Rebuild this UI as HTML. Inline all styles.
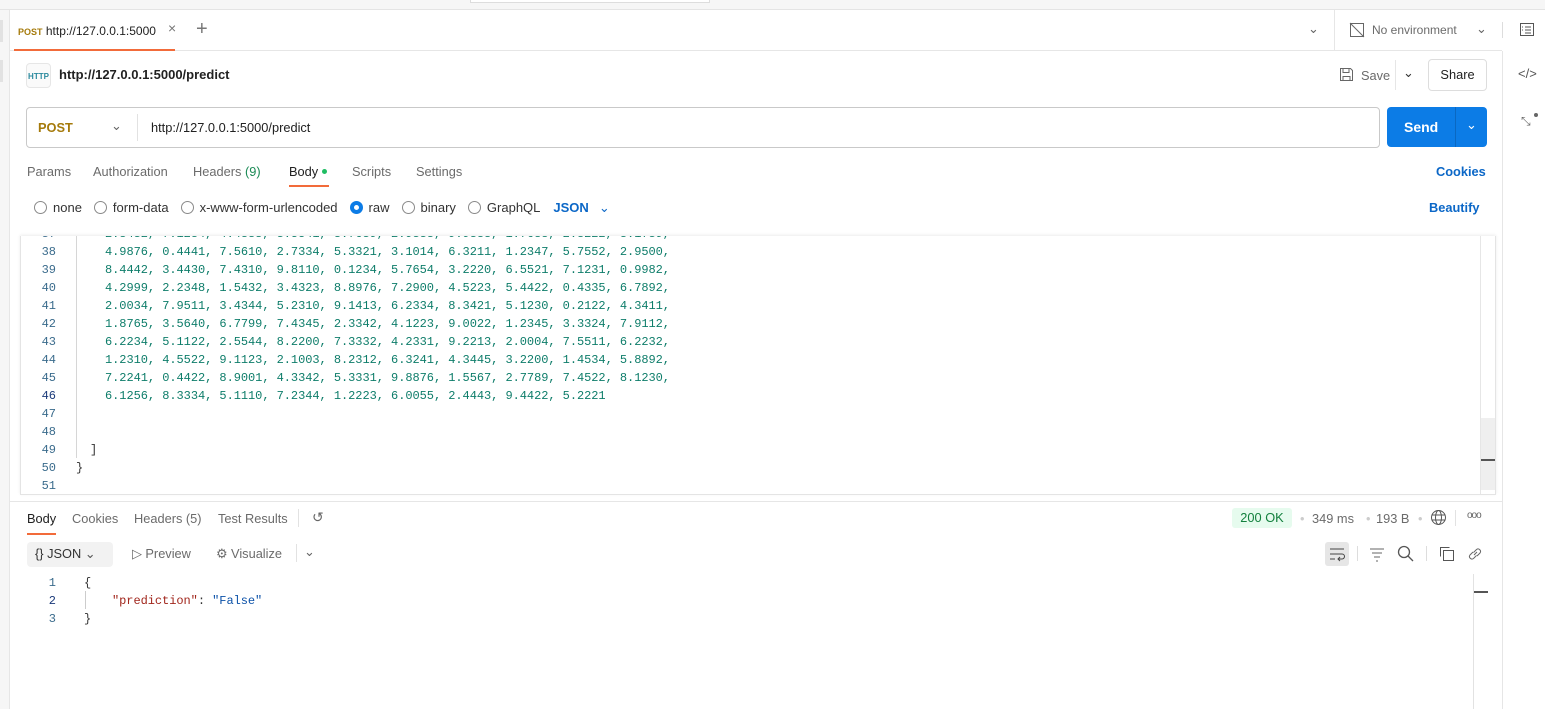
<!DOCTYPE html>
<html><head><meta charset="utf-8"><style>
*{box-sizing:border-box;margin:0;padding:0}
body{width:1545px;height:709px;overflow:hidden;background:#fff;font-family:"Liberation Sans",sans-serif;font-size:12.8px;color:#212121;position:relative}
.a{position:absolute}
.mono{font-family:"Liberation Mono",monospace;font-size:12px}
.g{color:#6b6b6b}
.ln{position:absolute;left:30px;width:26px;text-align:right;color:#3a6b8c}
.code{position:absolute;left:105px;color:#0e7d6a;white-space:pre;letter-spacing:-0.05px}
.rad{display:inline-block;width:13px;height:13px;border:1px solid #8a8a8a;border-radius:50%;vertical-align:-2px;margin-right:6px}
.chev{font-size:13px}
</style></head><body>
<div class="a" style="left:0;top:0;width:1545px;height:10px;background:#f6f6f6;border-bottom:1px solid #e4e4e4"></div>
<div class="a" style="left:470px;top:0;width:240px;height:3px;border:1px solid #ddd;border-top:none;background:#fff"></div>
<div class="a" style="left:0;top:10px;width:10px;height:699px;background:#f6f6f6;border-right:1px solid #e6e6e6"></div>
<div class="a" style="left:0;top:20px;width:3px;height:22px;background:#e2e2e2"></div>
<div class="a" style="left:0;top:60px;width:3px;height:22px;background:#e2e2e2"></div>
<div class="a" style="left:10px;top:50px;width:1492px;height:1px;background:#e6e6e6"></div>
<div class="a" style="left:18px;top:24px;font-size:12px"><span style="color:#a57a0b;font-size:9px;font-weight:bold">POST</span> http://127.0.0.1:5000</div>
<div class="a" style="left:168px;top:20px;color:#777;font-size:14px">×</div>
<div class="a" style="left:196px;top:18px;color:#777;font-size:20px;font-weight:300">+</div>
<div class="a" style="left:14px;top:49px;width:161px;height:2px;background:#f26b3a"></div>
<div class="a chev" style="left:1308px;top:21px;color:#666">&#8964;</div>
<div class="a" style="left:1334px;top:10px;width:1px;height:40px;background:#e6e6e6"></div>
<svg class="a" style="left:1349px;top:22px" width="16" height="16" viewBox="0 0 16 16" fill="none" stroke="#666"><rect x="1.5" y="1.5" width="13" height="13"/><path d="M1 1l14 14"/></svg>
<div class="a g" style="left:1372px;top:23px;font-size:12px">No environment</div>
<div class="a chev" style="left:1476px;top:21px;color:#666">&#8964;</div>
<div class="a" style="left:1502px;top:22px;width:1px;height:16px;background:#ddd"></div>
<svg class="a" style="left:1519px;top:22px" width="16" height="16" viewBox="0 0 16 16" fill="none" stroke="#555"><rect x="1.5" y="1.5" width="13" height="12"/><path d="M6 5h6M6 8h6M6 11h6M3 5h1M3 8h1"/></svg>
<div class="a" style="left:1502px;top:51px;width:1px;height:658px;background:#e6e6e6"></div>
<div class="a" style="left:1518px;top:66px;color:#555;font-size:13px">&lt;/&gt;</div>
<div class="a" style="left:1521px;top:114px;color:#666;font-size:12px">⤡</div>
<div class="a" style="left:1534px;top:113px;width:4px;height:4px;border-radius:50%;background:#666"></div>
<div class="a" style="left:26px;top:63px;width:25px;height:25px;border:1px solid #e6e6e6;border-radius:4px;background:#fafafa;color:#2b8a9e;font-size:8px;font-weight:bold;text-align:center;line-height:25px">HTTP</div>
<div class="a" style="left:59px;top:67px;font-size:13px;font-weight:bold">http://127.0.0.1:5000/predict</div>
<svg class="a" style="left:1339px;top:67px" width="15" height="15" viewBox="0 0 15 15" fill="none" stroke="#666"><path d="M1.5 1.5h10l2 2v10h-12z M4 1.5v4h6v-4 M4 13.5v-4h7v4"/></svg>
<div class="a g" style="left:1361px;top:68px">Save</div>
<div class="a" style="left:1395px;top:60px;width:1px;height:30px;background:#e6e6e6"></div>
<div class="a chev" style="left:1403px;top:65px;color:#333">&#8964;</div>
<div class="a" style="left:1428px;top:59px;width:59px;height:32px;border:1px solid #ddd;border-radius:4px;text-align:center;line-height:30px">Share</div>
<div class="a" style="left:26px;top:107px;width:1354px;height:41px;border:1px solid #c9c9c9;border-radius:4px"></div>
<div class="a" style="left:38px;top:120px;color:#a57a0b;font-weight:bold">POST</div>
<div class="a chev" style="left:111px;top:118px;color:#666">&#8964;</div>
<div class="a" style="left:137px;top:114px;width:1px;height:27px;background:#e2e2e2"></div>
<div class="a" style="left:151px;top:120px">http://127.0.0.1:5000/predict</div>
<div class="a" style="left:1387px;top:107px;width:100px;height:40px;background:#0c7ce6;border-radius:4px"></div>
<div class="a" style="left:1404px;top:119px;color:#fff;font-weight:bold;font-size:14px">Send</div>
<div class="a" style="left:1455px;top:107px;width:1px;height:40px;background:#0a68c2"></div>
<div class="a chev" style="left:1466px;top:117px;color:#fff">&#8964;</div>
<div class="a g" style="left:27px;top:164px">Params</div>
<div class="a g" style="left:93px;top:164px">Authorization</div>
<div class="a g" style="left:193px;top:164px">Headers <span style="color:#1a8a55">(9)</span></div>
<div class="a" style="left:289px;top:164px">Body</div>
<div class="a" style="left:322px;top:169px;width:5px;height:5px;border-radius:50%;background:#1fbd63"></div>
<div class="a" style="left:289px;top:185px;width:40px;height:2px;background:#f26b3a"></div>
<div class="a g" style="left:352px;top:164px">Scripts</div>
<div class="a g" style="left:416px;top:164px">Settings</div>
<div class="a" style="left:1436px;top:164px;color:#0b67c7;font-weight:bold">Cookies</div>
<div class="a" style="left:34px;top:200px;color:#333;white-space:nowrap;font-size:13px">
<span class="rad"></span>none<span style="margin-left:12px" class="rad"></span>form-data<span style="margin-left:12px" class="rad"></span>x-www-form-urlencoded<span style="margin-left:12px;border:4px solid #0c7ce6" class="rad"></span>raw<span style="margin-left:12px" class="rad"></span>binary<span style="margin-left:12px" class="rad"></span>GraphQL<span style="margin-left:13px;color:#0b67c7;font-weight:bold">JSON</span><span style="margin-left:10px;color:#0b67c7" class="chev">&#8964;</span></div>
<div class="a" style="left:1429px;top:200px;color:#0b67c7;font-weight:bold">Beautify</div>
<div class="a" style="left:20px;top:236px;width:1476px;height:259px;border:1px solid #e4e4e4;border-top:none;overflow:hidden;box-shadow:0 -1px 3px rgba(0,0,0,.08)"></div>
<div class="a" style="left:76px;top:236px;width:1px;height:222px;background:#d6d6d6"></div>
<div class="a" style="left:1480px;top:236px;width:15px;height:258px;border-left:1px solid #e6e6e6"></div>
<div class="a" style="left:1481px;top:418px;width:14px;height:72px;background:#efefef"></div>
<div class="a" style="left:1481px;top:459px;width:14px;height:2px;background:#555"></div>
<div class="mono" style="position:absolute;left:0;top:0;width:1480px;height:494px;overflow:hidden">
<div style="position:absolute;left:0;top:236px;width:1480px;height:258px;overflow:hidden">
<div style="position:relative;top:-11px;line-height:18px">
<div style="position:relative;height:18px"><span class="ln">37</span><span class="code">2.3432, 7.1234, 4.4333, 3.5541, 3.7639, 2.9333, 9.9333, 1.7633, 2.3222, 3.1739,</span></div>
<div style="position:relative;height:18px"><span class="ln">38</span><span class="code">4.9876, 0.4441, 7.5610, 2.7334, 5.3321, 3.1014, 6.3211, 1.2347, 5.7552, 2.9500,</span></div>
<div style="position:relative;height:18px"><span class="ln">39</span><span class="code">8.4442, 3.4430, 7.4310, 9.8110, 0.1234, 5.7654, 3.2220, 6.5521, 7.1231, 0.9982,</span></div>
<div style="position:relative;height:18px"><span class="ln">40</span><span class="code">4.2999, 2.2348, 1.5432, 3.4323, 8.8976, 7.2900, 4.5223, 5.4422, 0.4335, 6.7892,</span></div>
<div style="position:relative;height:18px"><span class="ln">41</span><span class="code">2.0034, 7.9511, 3.4344, 5.2310, 9.1413, 6.2334, 8.3421, 5.1230, 0.2122, 4.3411,</span></div>
<div style="position:relative;height:18px"><span class="ln">42</span><span class="code">1.8765, 3.5640, 6.7799, 7.4345, 2.3342, 4.1223, 9.0022, 1.2345, 3.3324, 7.9112,</span></div>
<div style="position:relative;height:18px"><span class="ln">43</span><span class="code">6.2234, 5.1122, 2.5544, 8.2200, 7.3332, 4.2331, 9.2213, 2.0004, 7.5511, 6.2232,</span></div>
<div style="position:relative;height:18px"><span class="ln">44</span><span class="code">1.2310, 4.5522, 9.1123, 2.1003, 8.2312, 6.3241, 4.3445, 3.2200, 1.4534, 5.8892,</span></div>
<div style="position:relative;height:18px"><span class="ln">45</span><span class="code">7.2241, 0.4422, 8.9001, 4.3342, 5.3331, 9.8876, 1.5567, 2.7789, 7.4522, 8.1230,</span></div>
<div style="position:relative;height:18px"><span class="ln" style="color:#1b3a7a">46</span><span class="code">6.1256, 8.3334, 5.1110, 7.2344, 1.2223, 6.0055, 2.4443, 9.4422, 5.2221</span></div>
<div style="position:relative;height:18px"><span class="ln">47</span></div>
<div style="position:relative;height:18px"><span class="ln">48</span></div>
<div style="position:relative;height:18px"><span class="ln">49</span><span class="code" style="left:90px;color:#333">]</span></div>
<div style="position:relative;height:18px"><span class="ln">50</span><span class="code" style="left:76px;color:#333">}</span></div>
<div style="position:relative;height:18px"><span class="ln">51</span></div>
</div></div></div>
<div class="a" style="left:10px;top:501px;width:1492px;height:1px;background:#e6e6e6"></div>
<div class="a" style="left:27px;top:511px">Body</div>
<div class="a" style="left:27px;top:533px;width:29px;height:2px;background:#f26b3a"></div>
<div class="a g" style="left:72px;top:511px">Cookies</div>
<div class="a g" style="left:134px;top:511px">Headers (5)</div>
<div class="a g" style="left:218px;top:511px">Test Results</div>
<div class="a" style="left:298px;top:509px;width:1px;height:18px;background:#e2e2e2"></div>
<div class="a" style="left:312px;top:509px;color:#666;font-size:14px">↺</div>
<div class="a" style="left:1232px;top:508px;width:60px;height:20px;background:#e6fbee;border-radius:3px;color:#12803d;text-align:center;line-height:20px">200 OK</div>
<div class="a g" style="left:1300px;top:511px;color:#ccc">•</div>
<div class="a g" style="left:1312px;top:511px">349 ms</div>
<div class="a g" style="left:1366px;top:511px;color:#ccc">•</div>
<div class="a g" style="left:1376px;top:511px">193 B</div>
<div class="a g" style="left:1418px;top:511px;color:#ccc">•</div>
<svg class="a" style="left:1430px;top:509px" width="17" height="17" viewBox="0 0 17 17" fill="none" stroke="#555"><circle cx="8.5" cy="8.5" r="7"/><ellipse cx="8.5" cy="8.5" rx="3" ry="7"/><path d="M1.5 6h14M1.5 11h14"/></svg>
<div class="a" style="left:1455px;top:510px;width:1px;height:16px;background:#e2e2e2"></div>
<div class="a" style="left:1467px;top:510px;color:#666;font-size:10px;letter-spacing:-1px">ooo</div>
<div class="a" style="left:27px;top:542px;width:86px;height:25px;background:#f2f2f2;border-radius:4px"></div>
<div class="a" style="left:35px;top:546px;color:#333">{}&nbsp;JSON <span class="chev" style="color:#555">&#8964;</span></div>
<div class="a g" style="left:132px;top:546px">▷ Preview</div>
<div class="a g" style="left:216px;top:546px">⚙ Visualize</div>
<div class="a" style="left:296px;top:544px;width:1px;height:18px;background:#e2e2e2"></div>
<div class="a chev" style="left:304px;top:544px;color:#666">&#8964;</div>
<div class="a" style="left:1325px;top:542px;width:24px;height:24px;background:#e6e6e6;border-radius:3px"></div>
<svg class="a" style="left:1329px;top:546px" width="16" height="16" viewBox="0 0 16 16" fill="none" stroke="#444"><path d="M1 3h14M1 8h12a2.5 2.5 0 010 5H9M11 11l-2 2 2 2M1 13h5"/></svg>
<div class="a" style="left:1357px;top:546px;width:1px;height:15px;background:#ddd"></div>
<svg class="a" style="left:1369px;top:546px" width="16" height="16" viewBox="0 0 16 16" fill="none" stroke="#666"><path d="M1 3h14M3 7h10M5 11h6M7 15h2"/></svg>
<svg class="a" style="left:1397px;top:545px" width="17" height="17" viewBox="0 0 17 17" fill="none" stroke="#555" stroke-width="1.3"><circle cx="7" cy="7" r="5.5"/><path d="M11 11l5 5"/></svg>
<div class="a" style="left:1426px;top:546px;width:1px;height:15px;background:#ddd"></div>
<svg class="a" style="left:1439px;top:546px" width="16" height="16" viewBox="0 0 16 16" fill="none" stroke="#555"><path d="M1.5 10.5v-9h9"/><rect x="4.5" y="4.5" width="10" height="10"/></svg>
<svg class="a" style="left:1467px;top:546px" width="16" height="16" viewBox="0 0 16 16" fill="none" stroke="#666"><path d="M7 9l3-3M6 6l-3 3a2.5 2.5 0 003.5 3.5l3-3M10 10l3-3a2.5 2.5 0 00-3.5-3.5l-3 3"/></svg>
<div class="mono" style="position:absolute;left:0;top:574px;line-height:18px;width:1480px">
<div style="position:relative;height:18px"><span class="ln" style="left:30px;color:#3a6b8c">1</span><span class="code" style="left:84px;color:#333">{</span></div>
<div style="position:relative;height:18px"><span class="ln" style="color:#1b3a7a">2</span><span class="code" style="left:112px"><span style="color:#a1261c">"prediction"</span><span style="color:#333">: </span><span style="color:#0b51a8">"False"</span></span></div>
<div style="position:relative;height:18px"><span class="ln">3</span><span class="code" style="left:84px;color:#333">}</span></div>
</div>
<div class="a" style="left:85px;top:591px;width:1px;height:18px;background:#ccc"></div>
<div class="a" style="left:1473px;top:574px;width:1px;height:135px;background:#e2e2e2"></div>
<div class="a" style="left:1474px;top:591px;width:14px;height:2px;background:#555"></div>
</body></html>
